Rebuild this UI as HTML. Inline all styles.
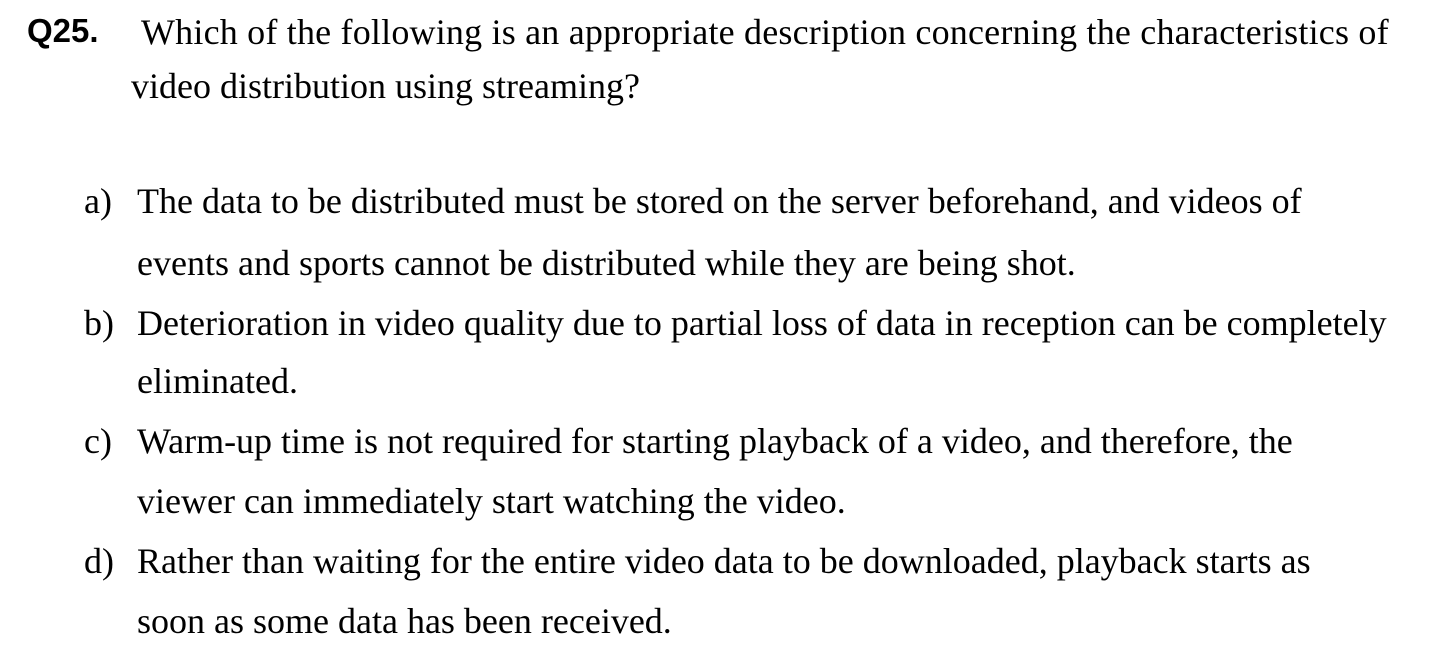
<!DOCTYPE html>
<html><head><meta charset="utf-8"><style>
body{margin:0;background:#fff;width:1450px;height:663px;overflow:hidden;position:relative;}
.l{position:absolute;white-space:nowrap;font-family:"Liberation Serif",serif;font-size:36px;line-height:40px;color:#000;}
.q{position:absolute;font-family:"Liberation Sans",sans-serif;font-weight:bold;font-size:33px;line-height:40px;left:27px;top:11px;}
</style></head><body>
<div class="q">Q25.</div>
<div class="l" style="left:141px;top:12px;letter-spacing:0.2px">Which of the following is an appropriate description concerning the characteristics of</div>
<div class="l" style="left:131px;top:66px">video distribution using streaming?</div>
<div class="l" style="left:84px;top:181px">a)</div>
<div class="l" style="left:137px;top:181px">The data to be distributed must be stored on the server beforehand, and videos of</div>
<div class="l" style="left:137px;top:243px">events and sports cannot be distributed while they are being shot.</div>
<div class="l" style="left:84px;top:303px">b)</div>
<div class="l" style="left:137px;top:303px">Deterioration in video quality due to partial loss of data in reception can be completely</div>
<div class="l" style="left:137px;top:361px">eliminated.</div>
<div class="l" style="left:84px;top:421px">c)</div>
<div class="l" style="left:137px;top:421px">Warm-up time is not required for starting playback of a video, and therefore, the</div>
<div class="l" style="left:137px;top:481px">viewer can immediately start watching the video.</div>
<div class="l" style="left:84px;top:541px">d)</div>
<div class="l" style="left:137px;top:541px">Rather than waiting for the entire video data to be downloaded, playback starts as</div>
<div class="l" style="left:137px;top:601px">soon as some data has been received.</div>
</body></html>
